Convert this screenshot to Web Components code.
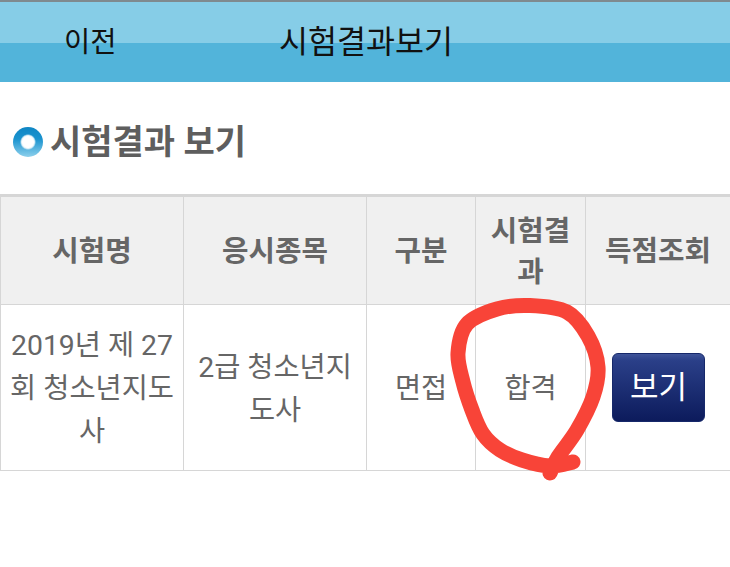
<!DOCTYPE html>
<html lang="ko"><head><meta charset="utf-8"><style>
html,body{margin:0;padding:0;background:#fff}
body{width:730px;height:567px;overflow:hidden;position:relative;font-family:"Roboto","Noto Sans CJK KR",sans-serif}
</style></head><body>
<app-header><span slot="back">이전</span><span slot="title">시험결과보기</span></app-header>
<section-title>시험결과 보기</section-title>
<result-table></result-table>
<red-circle></red-circle>
<script>
const F='"Roboto","Noto Sans CJK KR",sans-serif';
class H extends HTMLElement{constructor(){super();this.attachShadow({mode:'open'}).innerHTML=`<style>
:host{display:block;height:82px;box-sizing:border-box;border-top:2px solid #7f8a8f;font:31.5px/1 ${F};color:#111;
background:linear-gradient(#86cde7 0,#86cde7 41px,#52b4da 41px,#52b4da 100%)}
.w{display:flex;height:80px;box-sizing:border-box;padding:23px 0 0 64px;line-height:36px}
.b{width:215px;font-size:28.5px}
</style><div class="w"><div class="b"><slot name="back"></slot></div><div><slot name="title"></slot></div></div>`}}
customElements.define('app-header',H);
class T extends HTMLElement{constructor(){super();this.attachShadow({mode:'open'}).innerHTML=`<style>
:host{display:flex;align-items:center;gap:7px;box-sizing:border-box;height:112px;padding:8px 0 0 13px;font:700 34px/1 ${F};color:#5e5e5e}
i{display:block;width:30px;height:30px;border-radius:50%;background:radial-gradient(circle at 50% 50%,#fff 0 5.5px,#dff1f9 6.5px,transparent 8px),linear-gradient(#0f86c4,#1a93cf 40%,#8dd0ec)}
</style><i></i><span><slot></slot></span>`}}
customElements.define('section-title',T);
class R extends HTMLElement{constructor(){super();this.attachShadow({mode:'open'}).innerHTML=`<style>
:host{display:block;border-top:3px solid #d6d6d6;font:28.4px/43px ${F};color:#666;box-sizing:border-box}
.g{display:grid;grid-template-columns:183px 183px 109px 110px 145px;grid-template-rows:108px 166px;box-sizing:border-box;width:730px}
.g>div{display:flex;align-items:center;justify-content:center;text-align:center;box-sizing:border-box;border-left:1px solid #d6d6d6;border-bottom:1px solid #d6d6d6;padding-top:2px}
.g>div.h{background:#f0f0f0;font-weight:700;color:#666;line-height:41px;font-size:28.8px;padding:2px 8px 0}
.g>div.c{padding:2px 8px 0}
.g>div.b{padding-top:0;padding-left:1px}
button{all:unset;box-sizing:border-box;width:93px;height:69px;border:1px solid #16286a;border-radius:6px;background:linear-gradient(#3f5499 0,#2a3f88 10%,#0c1b5c 100%);color:#fff;font:31px/66px ${F};text-align:center}
</style><div class="g">
<div class="h">시험명</div><div class="h">응시종목</div><div class="h">구분</div><div class="h">시험결과</div><div class="h">득점조회</div>
<div class="c">2019년 제 27회 청소년지도사</div><div class="c">2급 청소년지도사</div><div>면접</div><div>합격</div><div class="b"><button>보기</button></div>
</div>`}}
customElements.define('result-table',R);
class C extends HTMLElement{constructor(){super();
const p=[[573,462],[550,466],[522,460],[500,450],[483,434],[472,410],[463,382],[458,353],[467,324],[497,309],[530,305.5],[567,312],[588,336],[598,367],[593,397],[577,430],[558,457],[550,473]];
let d='M'+p[0];
for(let i=0;i<p.length-1;i++){const a=p[i-1]||p[i],b=p[i],c=p[i+1],e=p[i+2]||c;
d+=`C${(b[0]+(c[0]-a[0])/6).toFixed(1)} ${(b[1]+(c[1]-a[1])/6).toFixed(1)} ${(c[0]-(e[0]-b[0])/6).toFixed(1)} ${(c[1]-(e[1]-b[1])/6).toFixed(1)} ${c[0]} ${c[1]}`}
this.attachShadow({mode:'open'}).innerHTML=`<style>
:host{position:absolute;left:0;top:0;width:730px;height:567px;pointer-events:none}
svg{display:block}
</style><svg width="730" height="567" viewBox="0 0 730 567"><path d="${d}" fill="none" stroke="#f84438" stroke-width="15" stroke-linecap="round" stroke-linejoin="round"/></svg>`}}
customElements.define('red-circle',C);
</script></body></html>
